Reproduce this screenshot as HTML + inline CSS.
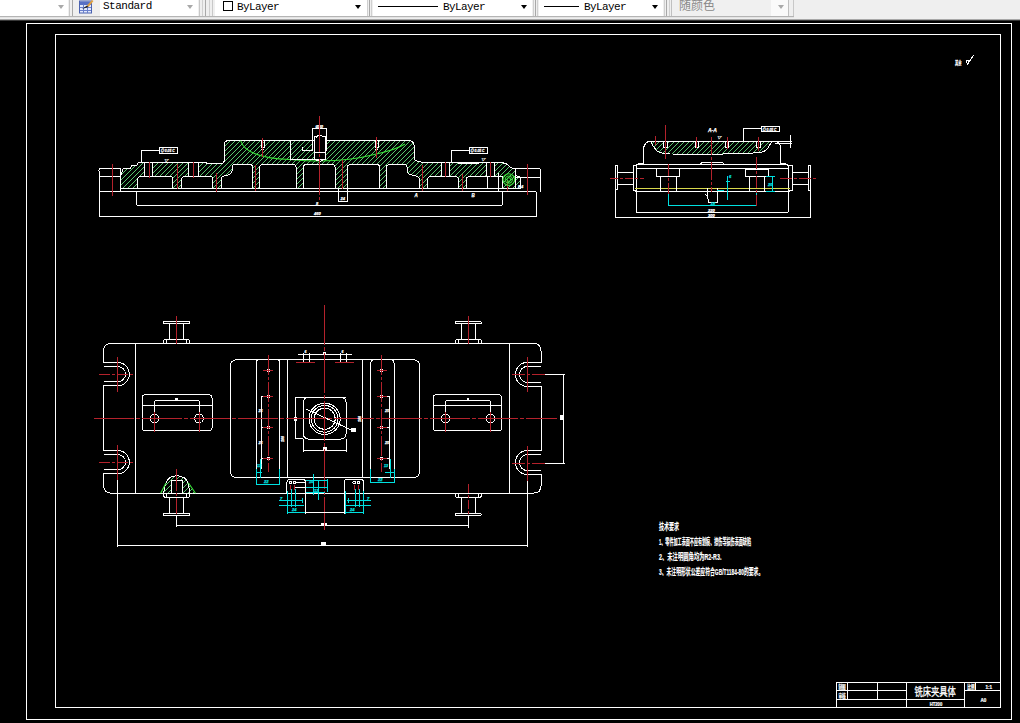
<!DOCTYPE html>
<html><head><meta charset="utf-8"><title>AutoCAD</title>
<style>
html,body{margin:0;padding:0;background:#000;}
body{width:1020px;height:723px;overflow:hidden;position:relative;font-family:"Liberation Mono","Noto Sans CJK SC",monospace;}
#tb{position:absolute;left:0;top:0;width:1020px;height:21px;background:#efefef;}
#tb .ln1{position:absolute;left:0;top:16px;width:794px;height:1px;background:#b4b4b4;}
#tb .ln2{position:absolute;left:0;top:17px;width:794px;height:1px;background:#e4e4e4;}
#tb .ln3{position:absolute;left:0;top:19px;width:100%;height:1px;background:#a8a8a8;}
#tb .ln4{position:absolute;left:0;top:20px;width:100%;height:1px;background:#383838;}
.box{position:absolute;top:0;height:16px;background:#fff;}
.sep{position:absolute;top:0;height:16px;width:1px;background:#a8a8a8;}
.lbl{position:absolute;top:1px;font-size:11px;line-height:13px;color:#000;letter-spacing:-0.6px;white-space:nowrap;}
.arr{position:absolute;top:5px;width:0;height:0;border-left:3.5px solid transparent;border-right:3.5px solid transparent;border-top:4px solid #000;}
.arr.g{border-top-color:#a9a9a9;}
svg{position:absolute;left:0;top:0;}
.w{stroke:#fff;stroke-width:1;fill:none;}
.wk{stroke:#fff;stroke-width:1;fill:#000;}
.wf{stroke:none;fill:#fff;}
.k{stroke:none;fill:#000;}
.r{stroke:#b4222c;stroke-width:1;fill:none;}
.h{stroke:#62dc7a;stroke-width:0.9;fill:none;}
.g{stroke:#38e038;stroke-width:1.1;fill:none;shape-rendering:geometricPrecision;}
.c{stroke:#00e0e0;stroke-width:1;fill:none;}
.y{stroke:#d8d84c;stroke-width:1;fill:none;}
text{font-family:"Liberation Sans","Noto Sans CJK SC",sans-serif;}
.tw{fill:#fff;font-style:italic;font-weight:bold;stroke:#fff;stroke-width:0.25;}
.tc{fill:#00e0e0;font-style:italic;font-weight:bold;stroke:#00e0e0;stroke-width:0.25;}
.tn{fill:#fff;font-weight:bold;stroke:#fff;stroke-width:0.2;}
.tt{fill:#fff;stroke:#fff;stroke-width:0.3;}
</style></head>
<body>
<div id="tb">
  <div class="box" style="left:0;width:68px"></div><div class="arr g" style="left:58px"></div>
  <div class="sep" style="left:69px;background:#c8c8c8"></div><div class="sep" style="left:72px"></div>
  <svg width="16" height="14" style="left:78px;top:0" viewBox="0 0 16 14">
    <rect x="1.5" y="1" width="12" height="12" fill="#e4eafc" stroke="#4a62b0" stroke-width="1"/>
    <rect x="2" y="1.5" width="11" height="3.5" fill="#5870c4"/>
    <path d="M2,7.5H13M2,10.5H13M5.5,4.500V13M9.500,4.500V13" stroke="#6a80cc" stroke-width="1"/>
    <path d="M4,9 L9,5.500 L10.500,7 Z" fill="#222"/><path d="M9,5.500 L14,0 L15.500,1 L10.500,7 Z" fill="#e0a040"/>
  </svg>
  <div class="box" style="left:100px;width:98px"></div><div class="lbl" style="left:103px;top:0px;letter-spacing:-0.5px">Standard</div><div class="arr g" style="left:187px"></div>
  <div class="sep" style="left:199px;background:#c8c8c8"></div><div class="sep" style="left:202px;background:#d0d0d0"></div><div class="sep" style="left:205px"></div><div class="sep" style="left:209px;background:#d0d0d0"></div><div class="sep" style="left:212px;background:#c8c8c8"></div>
  <div class="box" style="left:215px;width:152px"></div>
  <div style="position:absolute;left:223px;top:1px;width:9px;height:9px;border:1px solid #000;background:#fff;box-sizing:border-box;width:10px;height:10px"></div>
  <div class="lbl" style="left:237px">ByLayer</div><div class="arr" style="left:355px"></div>
  <div class="sep" style="left:367px;background:#d0d0d0"></div><div class="sep" style="left:369px"></div><div class="sep" style="left:371px;background:#d0d0d0"></div>
  <div class="box" style="left:373px;width:159px"></div>
  <div style="position:absolute;left:378px;top:6px;width:60px;height:1px;background:#000"></div>
  <div class="lbl" style="left:443px">ByLayer</div><div class="arr" style="left:521px"></div>
  <div class="sep" style="left:533px;background:#d0d0d0"></div><div class="sep" style="left:535px"></div><div class="sep" style="left:537px;background:#d0d0d0"></div>
  <div class="box" style="left:539px;width:124px"></div>
  <div style="position:absolute;left:544px;top:6px;width:35px;height:1px;background:#000"></div>
  <div class="lbl" style="left:584px">ByLayer</div><div class="arr" style="left:652px"></div>
  <div class="sep" style="left:664px;background:#d0d0d0"></div><div class="sep" style="left:666px"></div><div class="sep" style="left:669px;background:#d0d0d0"></div>
  <div class="box" style="left:671px;width:118px;background:#f0f0f0;border-left:1px solid #c0c0c0;border-right:1px solid #c0c0c0;box-sizing:border-box"></div>
  <div class="box" style="left:771px;width:17px;background:#fafafa"></div>
  <div class="lbl" style="left:679px;top:-1px;letter-spacing:0;font-size:12px;line-height:14px;color:#8a8a8a;font-family:'Liberation Sans','Noto Sans CJK SC',sans-serif">随颜色</div>
  <div class="arr g" style="left:778px"></div>
  <div class="sep" style="left:793px;background:#c8c8c8"></div>
  <div class="ln1"></div><div class="ln2"></div><div class="ln3"></div><div class="ln4"></div>
</div>
<svg width="1020" height="723" viewBox="0 0 1020 723" shape-rendering="crispEdges">
<defs>
<pattern id="hat" width="4.7" height="4.7" patternUnits="userSpaceOnUse">
<path d="M-1,5.7 L5.7,-1 M-1,1 L1,-1 M3.7,5.7 L5.7,3.7" stroke="#2ed02e" stroke-width="1" fill="none"/>
</pattern>
</defs>
<rect x="26.5" y="23.5" width="985" height="696" rx="0" class="w"/>
<rect x="55.5" y="34.5" width="945" height="673" rx="0" class="w"/>
<clipPath id="c1"><path d="M120.3,188.3 L120.3,177 L123.2,168.6 L130.3,168.6 L131.5,165.6 L137.4,165 L138.2,162.4 L206,162.4 L206,163.7 L222,163.7 Q224.2,163 224.2,160 L224.2,145 Q224.2,140.6 229,140.6 L409,140.6 Q414.2,141 414.2,146 L414.2,158 Q415,162.2 423.5,162.2 L501.2,162.2 L507.6,164.4 L510.6,167.6 L515.3,168.8 L515.3,175.3 L520,177 L520,188 L502,188 L502,176.8 L468.2,176.8 Q466.7,176.8 466.7,178.3 L466.7,188 L458,188 L458,178.3 Q458,176.8 456.5,176.8 L429.3,176.8 Q427.8,176.8 427.8,178.3 L427.8,188 L419.6,188 L419.6,179 Q419,176.5 414,175.5 Q407,174.5 407,171 L407,166.5 Q407,164.8 405,164.8 L388.7,164.8 Q386.7,164.8 386.7,166.8 L386.7,188 L379.6,188 L379.6,166.8 Q379.6,164.8 377.6,164.8 L349.7,164.8 Q347.7,164.8 347.7,166.8 L347.7,188 L335,188 L335,166.8 Q335,164.8 333,164.8 L305.6,164.8 Q303.6,164.8 303.6,166.8 L303.6,188 L296,188 L296,166.8 Q296,164.8 294,164.8 L261.9,164.8 Q259.9,164.8 259.9,166.8 L259.9,188 L252.4,188 L252.4,166.8 Q252.4,164.8 250.4,164.8 L234,164.8 Q232,164.8 232,166.8 L232,171 Q232,174.5 226,175.5 Q221,176.5 221,179 L221,188 L212.4,188 L212.4,178.3 Q212.4,176.8 210.9,176.8 L183.3,176.8 Q181.8,176.8 181.8,178.3 L181.8,188 L172.4,188 L172.4,178.3 Q172.4,176.8 170.9,176.8 L139.3,176.8 Q137.8,176.8 137.8,178.3 L137.8,188 Z"/></clipPath>
<path d="M56.3,195 L116.3,135 M61.3,195 L121.3,135 M66.3,195 L126.3,135 M71.3,195 L131.3,135 M76.3,195 L136.3,135 M81.3,195 L141.3,135 M86.3,195 L146.3,135 M91.3,195 L151.3,135 M96.3,195 L156.3,135 M101.3,195 L161.3,135 M106.3,195 L166.3,135 M111.3,195 L171.3,135 M116.3,195 L176.3,135 M121.3,195 L181.3,135 M126.3,195 L186.3,135 M131.3,195 L191.3,135 M136.3,195 L196.3,135 M141.3,195 L201.3,135 M146.3,195 L206.3,135 M151.3,195 L211.3,135 M156.3,195 L216.3,135 M161.3,195 L221.3,135 M166.3,195 L226.3,135 M171.3,195 L231.3,135 M176.3,195 L236.3,135 M181.3,195 L241.3,135 M186.3,195 L246.3,135 M191.3,195 L251.3,135 M196.3,195 L256.3,135 M201.3,195 L261.3,135 M206.3,195 L266.3,135 M211.3,195 L271.3,135 M216.3,195 L276.3,135 M221.3,195 L281.3,135 M226.3,195 L286.3,135 M231.3,195 L291.3,135 M236.3,195 L296.3,135 M241.3,195 L301.3,135 M246.3,195 L306.3,135 M251.3,195 L311.3,135 M256.3,195 L316.3,135 M261.3,195 L321.3,135 M266.3,195 L326.3,135 M271.3,195 L331.3,135 M276.3,195 L336.3,135 M281.3,195 L341.3,135 M286.3,195 L346.3,135 M291.3,195 L351.3,135 M296.3,195 L356.3,135 M301.3,195 L361.3,135 M306.3,195 L366.3,135 M311.3,195 L371.3,135 M316.3,195 L376.3,135 M321.3,195 L381.3,135 M326.3,195 L386.3,135 M331.3,195 L391.3,135 M336.3,195 L396.3,135 M341.3,195 L401.3,135 M346.3,195 L406.3,135 M351.3,195 L411.3,135 M356.3,195 L416.3,135 M361.3,195 L421.3,135 M366.3,195 L426.3,135 M371.3,195 L431.3,135 M376.3,195 L436.3,135 M381.3,195 L441.3,135 M386.3,195 L446.3,135 M391.3,195 L451.3,135 M396.3,195 L456.3,135 M401.3,195 L461.3,135 M406.3,195 L466.3,135 M411.3,195 L471.3,135 M416.3,195 L476.3,135 M421.3,195 L481.3,135 M426.3,195 L486.3,135 M431.3,195 L491.3,135 M436.3,195 L496.3,135 M441.3,195 L501.3,135 M446.3,195 L506.3,135 M451.3,195 L511.3,135 M456.3,195 L516.3,135 M461.3,195 L521.3,135 M466.3,195 L526.3,135 M471.3,195 L531.3,135 M476.3,195 L536.3,135 M481.3,195 L541.3,135 M486.3,195 L546.3,135 M491.3,195 L551.3,135 M496.3,195 L556.3,135 M501.3,195 L561.3,135 M506.3,195 L566.3,135 M511.3,195 L571.3,135 M516.3,195 L576.3,135 M521.3,195 L581.3,135" class="h" clip-path="url(#c1)"/>
<rect x="144" y="162.6" width="8.699999999999989" height="14.2" rx="0" class="wk"/>
<rect x="188.5" y="162.6" width="9.5" height="14.2" rx="0" class="wk"/>
<rect x="441" y="162.6" width="8.5" height="14.2" rx="0" class="wk"/>
<rect x="486.5" y="162.6" width="8.0" height="14.2" rx="0" class="wk"/>
<path d="M120.3,188.3 L120.3,177 L123.2,168.6 L130.3,168.6 L131.5,165.6 L137.4,165 L138.2,162.4 L206,162.4 L206,163.7 L222,163.7 Q224.2,163 224.2,160 L224.2,145 Q224.2,140.6 229,140.6 L409,140.6 Q414.2,141 414.2,146 L414.2,158 Q415,162.2 423.5,162.2 L501.2,162.2 L507.6,164.4 L510.6,167.6 L515.3,168.8 L515.3,175.3 L520,177 L520,188 L502,188 L502,176.8 L468.2,176.8 Q466.7,176.8 466.7,178.3 L466.7,188 L458,188 L458,178.3 Q458,176.8 456.5,176.8 L429.3,176.8 Q427.8,176.8 427.8,178.3 L427.8,188 L419.6,188 L419.6,179 Q419,176.5 414,175.5 Q407,174.5 407,171 L407,166.5 Q407,164.8 405,164.8 L388.7,164.8 Q386.7,164.8 386.7,166.8 L386.7,188 L379.6,188 L379.6,166.8 Q379.6,164.8 377.6,164.8 L349.7,164.8 Q347.7,164.8 347.7,166.8 L347.7,188 L335,188 L335,166.8 Q335,164.8 333,164.8 L305.6,164.8 Q303.6,164.8 303.6,166.8 L303.6,188 L296,188 L296,166.8 Q296,164.8 294,164.8 L261.9,164.8 Q259.9,164.8 259.9,166.8 L259.9,188 L252.4,188 L252.4,166.8 Q252.4,164.8 250.4,164.8 L234,164.8 Q232,164.8 232,166.8 L232,171 Q232,174.5 226,175.5 Q221,176.5 221,179 L221,188 L212.4,188 L212.4,178.3 Q212.4,176.8 210.9,176.8 L183.3,176.8 Q181.8,176.8 181.8,178.3 L181.8,188 L172.4,188 L172.4,178.3 Q172.4,176.8 170.9,176.8 L139.3,176.8 Q137.8,176.8 137.8,178.3 L137.8,188 Z" class="w"/>
<path d="M240.6,140.6 Q246,158 290,159.5 Q306,161 319.8,161 Q352,160.5 372,155 Q396,150 405,144" class="g"/>
<path d="M120.6,168 L101.5,168 Q99,168 99,170.5 L99,216.7 M99,176.7 L120.6,176.7 M120.6,168.4 L120.6,191.5" class="w"/>
<line x1="99" y1="191.5" x2="536" y2="191.5" class="w"/>
<line x1="121" y1="188" x2="515" y2="188" class="w"/>
<line x1="99" y1="216.7" x2="536" y2="216.7" class="w"/>
<line x1="536" y1="191.5" x2="536" y2="216.7" class="w"/>
<line x1="136.6" y1="191.5" x2="136.6" y2="205.3" class="w"/>
<line x1="136.6" y1="205.3" x2="502.4" y2="205.3" class="w"/>
<line x1="502.4" y1="191.5" x2="502.4" y2="205.3" class="w"/>
<path d="M515.3,188 L515.3,168.2 L538,168.2 Q540.6,168.2 540.6,171 L540.6,191.8 M515.3,177 L540.6,177" class="w"/>
<path d="M457.6,162.2 L458.8,163.9 L478.2,163.9 L479.4,162.2" class="w"/>
<rect x="312.4" y="140.7" width="14.5" height="10" rx="0" class="k"/>
<path d="M312.4,150.7 L312.4,128.7 L326.9,128.7 L326.9,150.7" class="w"/>
<path d="M314.4,159 L314.4,137 Q315.5,136.2 316.5,137 Q318,135 319.8,135.4 Q321.5,135 322.8,137 Q324,136.2 325.5,137 L325.5,159 L319.8,161.5 Z" class="wk"/>
<path d="M314.4,152.3 L325.5,152.3 M314.4,159 L325.5,159" class="w"/>
<path d="M290,140.7 L290,159 L314.4,159 M302.4,146.5 L302.4,150.7 L313.2,150.7" class="w"/>
<rect x="338.5" y="188" width="8.7" height="13.5" rx="0" class="w"/>
<text x="315.5" y="128.4" font-size="4" class="tw">Ø30</text>
<text x="340.5" y="199.5" font-size="4" class="tw">24</text>
<rect x="261.0" y="140.6" width="3" height="7" rx="0" class="w"/>
<line x1="261.0" y1="149.5" x2="264.0" y2="149.5" class="w"/>
<rect x="375.0" y="140.6" width="3" height="7" rx="0" class="w"/>
<line x1="375.0" y1="149.5" x2="378.0" y2="149.5" class="w"/>
<rect x="159.5" y="147.3" width="18.3" height="6.2" rx="0" class="w"/>
<path d="M159.5,150.4 L141,150.4 L141,162.6" class="w"/>
<rect x="469.3" y="147.3" width="18.5" height="6.2" rx="0" class="w"/>
<path d="M469.3,150.4 L451.5,150.4 L451.5,162.2" class="w"/>
<text transform="translate(160.5 152.4) scale(0.8 1)" font-size="4.2" class="tw">◎ 0.05 C</text>
<text transform="translate(470.3 152.4) scale(0.8 1)" font-size="4.2" class="tw">◎ 0.05 C</text>
<text x="164" y="161.5" font-size="4" class="tw">▽</text>
<text x="481" y="161" font-size="4" class="tw">▽</text>
<line x1="112.7" y1="164" x2="112.7" y2="195.5" class="r"/>
<line x1="149.3" y1="162" x2="149.3" y2="177.5" class="r"/>
<line x1="177" y1="164" x2="177" y2="189" class="r"/>
<line x1="193.2" y1="162" x2="193.2" y2="177.5" class="r"/>
<line x1="216.7" y1="172.7" x2="216.7" y2="192" class="r"/>
<line x1="255.2" y1="165" x2="255.2" y2="191" class="r"/>
<line x1="262.5" y1="137.5" x2="262.5" y2="157" class="r"/>
<line x1="342.5" y1="160" x2="342.5" y2="189" class="r"/>
<line x1="376.5" y1="137" x2="376.5" y2="157.6" class="r"/>
<line x1="422.7" y1="164.7" x2="422.7" y2="190.6" class="r"/>
<line x1="445.2" y1="161.6" x2="445.2" y2="176.5" class="r"/>
<line x1="462.3" y1="174" x2="462.3" y2="190.6" class="r"/>
<line x1="490.5" y1="161.6" x2="490.5" y2="176.5" class="r"/>
<line x1="507" y1="179.6" x2="507" y2="190.6" class="r"/>
<line x1="527.3" y1="164" x2="527.3" y2="195.3" class="r"/>
<line x1="319.4" y1="116" x2="319.4" y2="200" class="r" stroke-dasharray="36 2 3 2"/>
<circle cx="508.8" cy="179.6" r="5.8" class="g"/>
<circle cx="508.8" cy="179.6" r="3.6" class="g"/>
<circle cx="508.8" cy="179.6" r="1.8" class="g"/>
<text x="314" y="214.8" font-size="4" class="tw">460</text>
<text x="414.5" y="196.5" font-size="4.5" class="tw">A</text>
<text x="471.5" y="196.5" font-size="4.5" class="tw">B</text>
<text x="316" y="204.5" font-size="4" class="tw">8</text>
<path d="M487.6,176.8 L487.6,188 M498.5,173 L498.5,191.5" class="w"/>
<text x="518" y="187.5" font-size="4" class="tw">R4</text>
<clipPath id="c2"><path d="M650.8,141.3 L772,141.3 L768,148 Q766,151.5 760,152.5 L742,153.8 L705,154.2 L670,154 Q660,153.5 656.5,150.5 Q652.5,146 650.8,141.3 Z"/></clipPath>
<path d="M623.3,158 L643.3,138 M628.3,158 L648.3,138 M633.3,158 L653.3,138 M638.3,158 L658.3,138 M643.3,158 L663.3,138 M648.3,158 L668.3,138 M653.3,158 L673.3,138 M658.3,158 L678.3,138 M663.3,158 L683.3,138 M668.3,158 L688.3,138 M673.3,158 L693.3,138 M678.3,158 L698.3,138 M683.3,158 L703.3,138 M688.3,158 L708.3,138 M693.3,158 L713.3,138 M698.3,158 L718.3,138 M703.3,158 L723.3,138 M708.3,158 L728.3,138 M713.3,158 L733.3,138 M718.3,158 L738.3,138 M723.3,158 L743.3,138 M728.3,158 L748.3,138 M733.3,158 L753.3,138 M738.3,158 L758.3,138 M743.3,158 L763.3,138 M748.3,158 L768.3,138 M753.3,158 L773.3,138 M758.3,158 L778.3,138 M763.3,158 L783.3,138 M768.3,158 L788.3,138 M773.3,158 L793.3,138 M778.3,158 L798.3,138" class="h" clip-path="url(#c2)"/>
<rect x="663.8" y="141.3" width="3.2" height="6.6" rx="0" class="wk"/>
<rect x="695.0" y="141.3" width="3.2" height="6.6" rx="0" class="wk"/>
<rect x="725.6" y="141.3" width="3.2" height="6.6" rx="0" class="wk"/>
<rect x="756.8" y="141.3" width="3.2" height="6.6" rx="0" class="wk"/>
<path d="M650.8,141.3 L772,141.3 L768,148 Q766,151.5 760,152.5 L742,153.8 L705,154.2 L670,154 Q660,153.5 656.5,150.5 Q652.5,146 650.8,141.3 Z" class="w"/>
<path d="M650.8,141.3 L650,141 Q645,142 643.6,147.6 L643.6,163.6" class="w"/>
<path d="M772,141.3 L791.5,141.3 M775,143 L791.5,143 M790.8,134.5 L790.8,148.3 M780.3,144.7 L780.3,163.6 M776.5,141.3 L780.3,144.7" class="w"/>
<path d="M637.8,164.3 L786,164.3 Q788,164.3 788,166 L788,212.3 M636.3,166 Q636.3,164.3 637.8,164.3 M636.3,166 L636.3,212.3" class="w"/>
<line x1="643.6" y1="163.6" x2="637.8" y2="163.6" class="w"/>
<line x1="780.3" y1="163.6" x2="786" y2="163.6" class="w"/>
<line x1="636.3" y1="168" x2="788" y2="168" class="w"/>
<path d="M700,164.3 L702,162.6 L722.5,162.6 L724.5,164.3" class="w"/>
<line x1="634.9" y1="188.3" x2="790" y2="188.3" class="y"/>
<line x1="634.9" y1="191.2" x2="790" y2="191.2" class="w"/>
<line x1="636.3" y1="212.3" x2="788" y2="212.3" class="w"/>
<path d="M636.3,165.3 L633.7,165.3 L633.7,190.5 L636.3,190.5 M633.7,172 L617.7,172 M633.7,184.6 L617.7,184.6" class="w"/>
<rect x="615.5" y="165.3" width="2.2" height="24.4" rx="0" class="w"/>
<path d="M615.5,189.7 L615.5,217.3 L810.7,217.3 L810.7,190.5" class="w"/>
<path d="M788,165.3 L792.3,165.3 L792.3,190.5 L788,190.5 M792.3,172 L808.2,172 M792.3,184.6 L808.2,184.6" class="w"/>
<rect x="808.2" y="165.3" width="2.5" height="25.2" rx="0" class="w"/>
<rect x="656.7" y="168.7" width="22.9" height="7.7" rx="0" class="w"/>
<path d="M660.3,176.4 L660.3,191.2 M676.3,176.4 L676.3,191.2" class="w"/>
<rect x="745.8" y="169" width="22.5" height="7.4" rx="0" class="w"/>
<path d="M749.7,176.4 L749.7,191.2 M764.7,176.4 L764.7,191.2" class="w"/>
<path d="M707.6,188.3 L707.6,198 L709,202.8 L717.4,202.8 L717.4,188.3 M705,194 L707.6,196.5" class="w"/>
<path d="M668.3,194 L668.3,206 M756.7,192.5 L756.7,206 M668.3,205.7 L756.7,205.7" class="c"/>
<path d="M727.6,176 L727.6,200 M726,181 L730,181 M717.4,190.5 L724,190.5" class="c"/>
<path d="M772.6,176.4 L772.6,191.2 M766,176.4 L775,176.4 M766,191.2 L775,191.2" class="c"/>
<text x="768" y="185.5" font-size="4" class="tc">20</text>
<text x="710.5" y="205" font-size="4" class="tc">18</text>
<text x="729" y="178" font-size="4" class="tc">6</text>
<text x="708" y="212" font-size="4" class="tw">220</text>
<text x="708" y="217" font-size="4" class="tw">300</text>
<line x1="655.2" y1="136" x2="655.2" y2="144.7" class="r"/>
<line x1="665.4" y1="125" x2="665.4" y2="158.5" class="r"/>
<line x1="696.6" y1="136.7" x2="696.6" y2="147.6" class="r"/>
<line x1="727.2" y1="136.7" x2="727.2" y2="149" class="r"/>
<line x1="758.4" y1="136.7" x2="758.4" y2="150.5" class="r"/>
<line x1="711.5" y1="136.7" x2="711.5" y2="192" class="r" stroke-dasharray="18 2 3 2"/>
<line x1="668.3" y1="164.3" x2="668.3" y2="194" class="r" stroke-dasharray="12 2 3 2"/>
<line x1="756.7" y1="157" x2="756.7" y2="205.7" class="r" stroke-dasharray="12 2 3 2"/>
<line x1="610" y1="178.5" x2="643.6" y2="178.5" class="r" stroke-dasharray="8 2 3 2"/>
<line x1="780.3" y1="178.5" x2="815.5" y2="178.5" class="r" stroke-dasharray="12 2 3 2"/>
<rect x="761.3" y="126.1" width="18.6" height="5.5" rx="0" class="w"/>
<path d="M761.3,128.8 L743.3,128.8 L743.3,141.3" class="w"/>
<text transform="translate(762.3 130.6) scale(0.8 1)" font-size="4.2" class="tw">◎ 0.05 C</text>
<text x="708" y="131.8" font-size="5" class="tw">A-A</text>
<text x="717" y="138.5" font-size="4" class="tw">▽</text>
<path d="M111.6,343.3 L533.1,343.3 Q541.1,343.3 541.1,351.3 L541.1,362.3 L527.5,362.3 A12.1,12.1 0 0 0 527.5,386.5 L541.1,386.5 L541.1,450.4 L527.5,450.4 A12.1,12.1 0 0 0 527.5,474.6 L541.1,474.6 L541.1,485.2 Q541.1,493.2 533.1,493.2 L111.6,493.2 Q103.6,493.2 103.6,485.2 L103.6,473.9 L117.6,473.9 A11.7,11.7 0 0 0 117.6,450.4 L103.6,450.4 L103.6,385.8 L117.6,385.8 A11.7,11.7 0 0 0 117.6,362.4 L103.6,362.4 L103.6,351.3 Q103.6,343.3 111.6,343.3 Z" class="w"/>
<path d="M103.6,366.6 L118,366.6 A7.5,7.5 0 0 1 118,381.6 L103.6,381.6 M103.6,454.6 L118,454.6 A7.5,7.5 0 0 1 118,469.6 L103.6,469.6" class="w"/>
<path d="M541.1,366.4 L527.5,366.4 A8,8 0 0 0 527.5,382.4 L541.1,382.4 M541.1,454.6 L527.5,454.6 A8,8 0 0 0 527.5,470.6 L541.1,470.6" class="w"/>
<line x1="135.5" y1="343.3" x2="135.5" y2="493.2" class="w"/>
<line x1="509.7" y1="343.3" x2="509.7" y2="493.2" class="w"/>
<rect x="230.3" y="359.7" width="189.4" height="117.9" rx="6" class="w"/>
<path d="M256,477.6 L256,362.7 Q256,359.7 259,359.7 L276.7,359.7 Q279.7,359.7 279.7,362.7 L279.7,477.6" class="w"/>
<path d="M370.9,477.6 L370.9,362.7 Q370.9,359.7 373.9,359.7 L391,359.7 Q394,359.7 394,362.7 L394,477.6" class="w"/>
<line x1="287.5" y1="359.7" x2="287.5" y2="477.6" class="w"/>
<line x1="362.7" y1="359.7" x2="362.7" y2="477.6" class="w"/>
<path d="M261,396.4 L261,469 M261,396.4 L268,396.4 M261,427.5 L265,427.5 M261,458.7 L265,458.7" class="w"/>
<path d="M389,396.4 L389,469 M389,396.4 L382,396.4 M389,427.5 L385,427.5 M389,458.7 L385,458.7" class="w"/>
<path d="M346,397.2 L295.6,397.2 L295.6,438.5 L303.4,438.5" class="w"/>
<rect x="303.4" y="397.2" width="42.6" height="41.9" rx="5" class="w"/>
<circle cx="324.6" cy="418.8" r="15.6" class="w"/>
<circle cx="324.6" cy="418.8" r="13.4" class="w"/>
<circle cx="324.6" cy="418.8" r="10.6" class="w"/>
<path d="M306,409 L350.7,429.7" class="w"/>
<rect x="351" y="427.5" width="4.5" height="4" rx="0" class="wf"/>
<path d="M303.4,439 L303.4,451.5 M346,439 L346,451.5 M303.4,450 L346,450" class="w"/>
<rect x="322.5" y="447.3" width="4" height="3.6" rx="0" class="wf"/>
<rect x="293.6" y="417" width="3" height="3.5" rx="0" class="wf"/>
<path d="M298.2,354.6 L351.8,354.6 M303.4,352.5 L303.4,361.8 M309,352.5 L309,361.8 M340.4,352.5 L340.4,361.8 M346.2,352.5 L346.2,361.8" class="w"/>
<path d="M296,362.2 L315,362.2 M335,362.2 L354,362.2" class="r"/>
<rect x="322.8" y="351.5" width="3.2" height="3" rx="0" class="wf"/>
<text x="304.5" y="352.5" font-size="3.5" class="tw">6</text>
<text x="341.6" y="352.5" font-size="3.5" class="tw">6</text>
<circle cx="268.4" cy="370.6" r="1.7" class="wf"/>
<line x1="263.4" y1="370.6" x2="273.4" y2="370.6" class="r"/>
<circle cx="268.4" cy="396.4" r="1.7" class="wf"/>
<line x1="263.4" y1="396.4" x2="273.4" y2="396.4" class="r"/>
<circle cx="268.4" cy="427.5" r="1.7" class="wf"/>
<line x1="263.4" y1="427.5" x2="273.4" y2="427.5" class="r"/>
<circle cx="268.4" cy="458.7" r="1.7" class="wf"/>
<line x1="263.4" y1="458.7" x2="273.4" y2="458.7" class="r"/>
<line x1="268.4" y1="355" x2="268.4" y2="472" class="r" stroke-dasharray="20 2 3 2"/>
<circle cx="381.6" cy="370.6" r="1.7" class="wf"/>
<line x1="376.6" y1="370.6" x2="386.6" y2="370.6" class="r"/>
<circle cx="381.6" cy="396.4" r="1.7" class="wf"/>
<line x1="376.6" y1="396.4" x2="386.6" y2="396.4" class="r"/>
<circle cx="381.6" cy="427.5" r="1.7" class="wf"/>
<line x1="376.6" y1="427.5" x2="386.6" y2="427.5" class="r"/>
<circle cx="381.6" cy="458.7" r="1.7" class="wf"/>
<line x1="376.6" y1="458.7" x2="386.6" y2="458.7" class="r"/>
<line x1="381.6" y1="355" x2="381.6" y2="472" class="r" stroke-dasharray="20 2 3 2"/>
<rect x="142.3" y="394.8" width="69.7" height="36" rx="3" class="w"/>
<line x1="142.8" y1="405.8" x2="211.5" y2="405.8" class="w"/>
<path d="M154.5,400.6 L199,400.6 M154.5,400.6 L154.5,414 M199,400.6 L199,414" class="w"/>
<circle cx="154.5" cy="418.5" r="4.3" class="w"/>
<circle cx="199" cy="418.5" r="4.3" class="w"/>
<rect x="175.45" y="397.6" width="2.6" height="3.8" rx="0" class="wf"/>
<line x1="154.5" y1="412" x2="154.5" y2="432" class="r"/>
<line x1="199" y1="412" x2="199" y2="432" class="r"/>
<rect x="433.2" y="394.8" width="68.4" height="36" rx="3" class="w"/>
<line x1="433.7" y1="405.8" x2="501.1" y2="405.8" class="w"/>
<path d="M445.6,400.6 L490.2,400.6 M445.6,400.6 L445.6,414 M490.2,400.6 L490.2,414" class="w"/>
<circle cx="445.6" cy="418.5" r="4.3" class="w"/>
<circle cx="490.2" cy="418.5" r="4.3" class="w"/>
<rect x="466.59999999999997" y="397.6" width="2.6" height="3.8" rx="0" class="wf"/>
<line x1="445.6" y1="412" x2="445.6" y2="432" class="r"/>
<line x1="490.2" y1="412" x2="490.2" y2="432" class="r"/>
<path d="M286.9,493.2 L286.9,482.3 Q286.9,479.3 289.9,479.3 L302.4,479.3 Q305.4,479.3 305.4,482.3 L305.4,493.2" class="w"/>
<path d="M344.1,493.2 L344.1,482.3 Q344.1,479.3 347.1,479.3 L360.5,479.3 Q363.5,479.3 363.5,482.3 L363.5,493.2" class="w"/>
<circle cx="290.7" cy="482.6" r="1.3" class="w"/>
<line x1="290.7" y1="485" x2="290.7" y2="489.5" class="r"/>
<circle cx="294.6" cy="482.6" r="1.3" class="w"/>
<line x1="294.6" y1="485" x2="294.6" y2="489.5" class="r"/>
<circle cx="354.2" cy="482.6" r="1.3" class="w"/>
<line x1="354.2" y1="485" x2="354.2" y2="489.5" class="r"/>
<circle cx="358.3" cy="482.6" r="1.3" class="w"/>
<line x1="358.3" y1="485" x2="358.3" y2="489.5" class="r"/>
<path d="M294.6,482.6 L305.4,482.6 M294.6,487.5 L305.4,487.5" class="w"/>
<rect x="163.6" y="321.5" width="26" height="2.3" rx="1.1" class="w"/>
<path d="M169.79999999999998,323.8 L169.79999999999998,339.5 M183.4,323.8 L183.4,339.5" class="w"/>
<path d="M163.6,343.3 L163.6,340.5 L164.6,339.5 L188.6,339.5 L189.6,340.5 L189.6,343.3 M166.6,339.5 L166.6,343.3 M186.6,339.5 L186.6,343.3" class="w"/>
<line x1="176.6" y1="316" x2="176.6" y2="343.8" class="r"/>
<rect x="455.3" y="321.5" width="26" height="2.3" rx="1.1" class="w"/>
<path d="M461.5,323.8 L461.5,339.5 M475.1,323.8 L475.1,339.5" class="w"/>
<path d="M455.3,343.3 L455.3,340.5 L456.3,339.5 L480.3,339.5 L481.3,340.5 L481.3,343.3 M458.3,339.5 L458.3,343.3 M478.3,339.5 L478.3,343.3" class="w"/>
<line x1="468.3" y1="316" x2="468.3" y2="343.8" class="r"/>
<rect x="163.6" y="513.2" width="26" height="2.4" rx="1.2" class="w"/>
<path d="M169.79999999999998,497.2 L169.79999999999998,513.2 M183.4,497.2 L183.4,513.2" class="w"/>
<path d="M163.6,493.2 L163.6,496.2 L164.6,497.2 L188.6,497.2 L189.6,496.2 L189.6,493.2 M166.6,493.2 L166.6,497.2 M186.6,493.2 L186.6,497.2" class="w"/>
<rect x="455.3" y="513.2" width="26" height="2.4" rx="1.2" class="w"/>
<path d="M461.5,497.2 L461.5,513.2 M475.1,497.2 L475.1,513.2" class="w"/>
<path d="M455.3,493.2 L455.3,496.2 L456.3,497.2 L480.3,497.2 L481.3,496.2 L481.3,493.2 M458.3,493.2 L458.3,497.2 M478.3,493.2 L478.3,497.2" class="w"/>
<line x1="468.3" y1="484" x2="468.3" y2="515" class="r" stroke-dasharray="9 2 3 2"/>
<clipPath id="c3"><path d="M160.7,493.2 L165,484 Q168,476 176.6,475.7 Q186,476 189,484 L195.5,493.2 Z"/></clipPath>
<path d="M136.3,495 L157.3,474 M141.3,495 L162.3,474 M146.3,495 L167.3,474 M151.3,495 L172.3,474 M156.3,495 L177.3,474 M161.3,495 L182.3,474 M166.3,495 L187.3,474 M171.3,495 L192.3,474 M176.3,495 L197.3,474 M181.3,495 L202.3,474 M186.3,495 L207.3,474 M191.3,495 L212.3,474 M196.3,495 L217.3,474" class="h" clip-path="url(#c3)"/>
<rect x="171" y="480.6" width="11" height="12.6" rx="0" class="wk"/>
<path d="M163.6,493.2 L165.5,484 Q168,476 176.6,475.7 Q186,476 188.5,484 L189.7,493.2" class="w"/>
<path d="M160.7,493.2 L166,483 M195.5,493.2 L188.5,483" class="g"/>
<line x1="176.6" y1="469" x2="176.6" y2="514" class="r" stroke-dasharray="22 2 3 2"/>
<path d="M117.5,477.3 L117.5,546.6 M117.5,545.5 L527.5,545.5 M527.5,478 L527.5,546.8" class="w"/>
<path d="M176.6,515 L176.6,527.2 M176.6,525.6 L468.5,525.6 M468.5,515 L468.5,527.5" class="w"/>
<path d="M544.6,374.5 L564.9,374.5 M544.6,463 L564.9,463 M563.9,374.5 L563.9,463" class="w"/>
<rect x="321" y="522.6" width="6" height="3.4" rx="0" class="wf"/>
<rect x="320.5" y="542.4" width="5" height="3.2" rx="0" class="wf"/>
<rect x="559.5" y="414.5" width="3" height="5" rx="0" class="wf"/>
<line x1="117.5" y1="356.90000000000003" x2="117.5" y2="391.6" class="r"/>
<line x1="99.3" y1="374.1" x2="132.6" y2="374.1" class="r" stroke-dasharray="11 2 3 2"/>
<line x1="117.5" y1="445.0" x2="117.5" y2="479.7" class="r"/>
<line x1="99.3" y1="462.2" x2="132.6" y2="462.2" class="r" stroke-dasharray="11 2 3 2"/>
<line x1="527.5" y1="357.0" x2="527.5" y2="392.0" class="r"/>
<line x1="511.6" y1="374.5" x2="544.6" y2="374.5" class="r" stroke-dasharray="13 2 3 2"/>
<line x1="527.5" y1="445.5" x2="527.5" y2="480.5" class="r"/>
<line x1="511.6" y1="463" x2="544.6" y2="463" class="r" stroke-dasharray="13 2 3 2"/>
<line x1="93.5" y1="418.4" x2="557" y2="418.4" class="r" stroke-dasharray="40 2 4 2"/>
<line x1="324.6" y1="305" x2="324.6" y2="530" class="r" stroke-dasharray="40 2 4 2"/>
<path d="M256,469 L256,484.4 M279.7,469 L279.7,484.4 M256,484 L279.7,484 M260,458.7 L260,477.6 M256,472 L262,472" class="c"/>
<path d="M370.9,469 L370.9,483 M394,469 L394,483 M370.9,482.4 L394,482.4 M390,458.7 L390,477.6 M385,472 L394,472" class="c"/>
<path d="M287,490.5 L287,513.5 M291.2,488.5 L291.2,506.5 M295,488.5 L295,506.5 M302.5,497.5 L302.5,503 M279.4,500.8 L302.5,500.8 M279.4,505.2 L304,505.2 M286.6,512.8 L305.6,512.8" class="c"/>
<path d="M345,490.5 L345,513.5 M355.4,488.5 L355.4,506.5 M359.1,488.5 L359.1,506.5 M363.7,490.5 L363.7,513.5 M348,497.5 L348,503 M347,500.8 L370.6,500.8 M346,505.2 L370.6,505.2 M344.6,512.8 L363.7,512.8" class="c"/>
<path d="M313.4,474.3 L313.4,495.4 M318.1,480 L318.1,499.8 M305.6,480.2 L328,480.2 M305.6,487.5 L328,487.5 M305.6,492.5 L324.6,492.5 M327.5,479.2 L327.5,492" class="c"/>
<path d="M305.6,493.4 L305.6,513.5 M344.6,493.4 L344.6,513.5" class="w"/>
<line x1="305.6" y1="512.5" x2="344.6" y2="512.5" class="w"/>
<text x="264" y="482.5" font-size="4" class="tc">22</text>
<text x="378" y="480.8" font-size="4" class="tc">22</text>
<text x="257" y="467" font-size="3.6" class="tc">13</text>
<text x="384" y="467" font-size="3.6" class="tc">13</text>
<text x="292" y="511" font-size="4" class="tc">24</text>
<text x="350" y="511" font-size="4" class="tc">24</text>
<text x="280" y="499.5" font-size="4" class="tc">7</text>
<text x="367" y="499.5" font-size="4" class="tc">7</text>
<text x="309" y="483" font-size="4" class="tc">10</text>
<text x="314" y="491.5" font-size="4" class="tc">12</text>
<text x="258.5" y="412" font-size="3.6" class="tw">25</text>
<text x="258.5" y="444" font-size="3.6" class="tw">25</text>
<text x="385" y="412" font-size="3.6" class="tw">25</text>
<text x="385" y="444" font-size="3.6" class="tw">25</text>
<text x="284" y="442" font-size="3.6" class="tw" transform="rotate(-90 284 442)">100</text>
<text x="361" y="422" font-size="3.6" class="tw" transform="rotate(-90 361 422)">100</text>
<text transform="translate(659 530.3) scale(0.58 1)" font-size="8.6" class="tn">技术要求</text>
<text transform="translate(659 545.4) scale(0.475 1)" font-size="8.6" class="tn">1、零件加工表面不应有划痕、擦伤等损伤表面缺陷</text>
<text transform="translate(659 560.2) scale(0.62 1)" font-size="8.6" class="tn">2、未注明圆角均为R2-R3.</text>
<text transform="translate(659 574.7) scale(0.563 1)" font-size="8.6" class="tn">3、未注明形状公差应符合GB/T1184-80的要求。</text>
<text transform="translate(955 64.5) scale(0.55 1)" font-size="6" class="tn">其余</text>
<path d="M966,60.3 L969.4,60.3 L967.7,64.3 Z M967.7,64.3 L973.8,54.8" class="w"/>
<rect x="836.7" y="682.7" width="163.7" height="24.6" rx="0" class="w"/>
<path d="M836.7,690.2 L906.9,690.2 M836.7,699.4 L964.5,699.4 M847.5,682.7 L847.5,699.4 M877.5,682.7 L877.5,699.4 M906.9,682.7 L906.9,707.3 M964.5,682.7 L964.5,707.3 M964.5,690.2 L1000.4,690.2 M975.9,682.7 L975.9,690.2" class="w"/>
<text transform="translate(914.5 696.2) scale(0.72 1)" font-size="11.5" class="tt">铣床夹具体</text>
<text transform="translate(929.8 705.6) scale(0.9 1)" font-size="4.6" class="tn">HT200</text>
<text transform="translate(838.4 688.8) scale(0.7 1)" font-size="5.2" class="tn">制图</text>
<text transform="translate(838.4 697.6) scale(0.7 1)" font-size="5.2" class="tn">审核</text>
<text transform="translate(967.3 688.8) scale(0.7 1)" font-size="5.2" class="tn">比例</text>
<text x="985.5" y="688.6" font-size="4.6" class="tn">1:1</text>
<text x="980.5" y="701.5" font-size="4.6" class="tn">A0</text>
</svg>
</body></html>
